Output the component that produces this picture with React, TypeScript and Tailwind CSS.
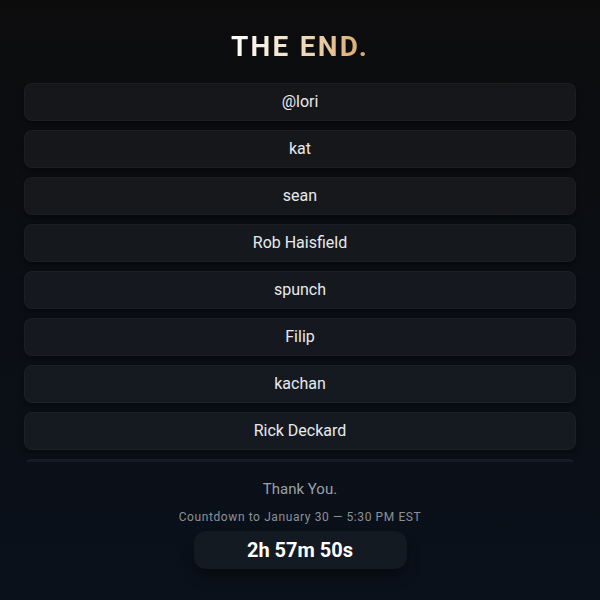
const names = [
  "@lori",
  "kat",
  "sean",
  "Rob Haisfield",
  "spunch",
  "Filip",
  "kachan",
  "Rick Deckard",
];

const cardClass =
  "flex h-[38px] shrink-0 items-center justify-center rounded-lg border border-white/[0.03] bg-white/[0.045] text-base text-[#e8eaed] shadow-md shadow-black/30";

export default function App() {
  return (
    <div className="flex h-screen flex-col items-center bg-gradient-to-b from-[#0c0c0d] to-[#0a111b] font-['Roboto',sans-serif]">
      <h1 className="pt-[30px] text-[28px] leading-[34px] font-bold tracking-[0.08em]">
        <span className="bg-gradient-to-r from-white via-[#f0dcc0] to-[#d6a566] bg-clip-text text-transparent">
          THE END.
        </span>
      </h1>

      <div className="mt-[19px] flex h-[379px] w-full flex-col gap-[9px] overflow-hidden px-6">
        {names.map((name) => (
          <div key={name} className={cardClass}>
            {name}
          </div>
        ))}
        {/* next entry, cut off by the scroll area */}
        <div className={cardClass} />
      </div>

      <p className="mt-4 text-[15px] leading-[22px] text-[#9aa0a8]">Thank You.</p>
      <p className="mt-[9px] text-xs leading-4 tracking-[0.05em] text-[#8b9098]">
        Countdown to January 30 — 5:30 PM EST
      </p>
      <div className="mt-[6px] flex h-[38px] w-[213px] items-center justify-center rounded-xl bg-white/[0.04] text-xl font-bold text-white shadow-lg shadow-black/30">
        2h 57m 50s
      </div>
    </div>
  );
}
